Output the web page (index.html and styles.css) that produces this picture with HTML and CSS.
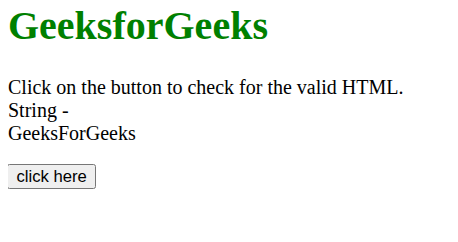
FILE: index.html
```html
<!DOCTYPE html>
<html>
<head>
<meta charset="utf-8">
<link rel="stylesheet" href="styles.css">
</head>
<body class="page">
<h1 class="title">GeeksforGeeks</h1>
<p class="desc">Click on the button to check for the valid HTML.<br>String -<br>GeeksForGeeks</p>
<button class="btn">click here</button>
</body>
</html>
```
FILE: styles.css
```css
html, body {
  background: #ffffff;
}
.page {
  margin: 0 8px;
  font-family: "Liberation Serif", "Times New Roman", serif;
  font-size: 20px;
  line-height: 23px;
  color: #000;
}
.title {
  margin: 3px 0 27px;
  font-size: 40px;
  line-height: 46px;
  font-weight: bold;
  color: #008000;
}
.desc {
  margin: 0 0 19px;
}
.btn {
  font-family: "Liberation Sans", Arial, sans-serif;
  font-size: 16.67px;
  line-height: 19px;
  padding: 2px 8.5px;
  margin: 0 0 0 -1px;
  background: #efefef;
  color: #000;
  border: 1px solid #767676;
  border-radius: 2.5px;
}
```
